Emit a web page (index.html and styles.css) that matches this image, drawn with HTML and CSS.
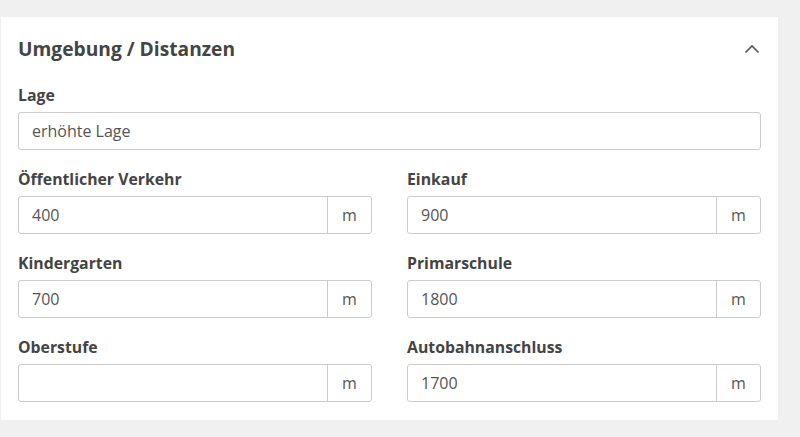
FILE: index.html
```html
<!DOCTYPE html>
<html lang="de">
<head>
<meta charset="utf-8">
<link rel="stylesheet" href="styles.css">
</head>
<body>
<section class="card">
  <header class="card-head">
    <h2 class="title">Umgebung / Distanzen</h2>
    <svg class="chevron" width="16" height="10" viewBox="0 0 16 10"><path d="M1.5 8.5 L8 2 L14.5 8.5" fill="none" stroke="#555" stroke-width="1.6"/></svg>
  </header>
  <div class="field">
    <label class="label">Lage</label>
    <div class="input"><span class="value">erhöhte Lage</span></div>
  </div>
  <div class="grid">
    <div class="field">
      <label class="label">Öffentlicher Verkehr</label>
      <div class="input group"><span class="value">400</span><span class="addon">m</span></div>
    </div>
    <div class="field">
      <label class="label">Einkauf</label>
      <div class="input group"><span class="value">900</span><span class="addon">m</span></div>
    </div>
    <div class="field">
      <label class="label">Kindergarten</label>
      <div class="input group"><span class="value">700</span><span class="addon">m</span></div>
    </div>
    <div class="field">
      <label class="label">Primarschule</label>
      <div class="input group"><span class="value">1800</span><span class="addon">m</span></div>
    </div>
    <div class="field">
      <label class="label">Oberstufe</label>
      <div class="input group"><span class="value"></span><span class="addon">m</span></div>
    </div>
    <div class="field">
      <label class="label">Autobahnanschluss</label>
      <div class="input group"><span class="value">1700</span><span class="addon">m</span></div>
    </div>
  </div>
</section>
</body>
</html>
```
FILE: styles.css
```css
html, body {
  margin: 0;
  padding: 0;
  background: #f0f0f0;
  font-family: "Open Sans", "Noto Sans", sans-serif;
}
body {
  padding-top: 17px;
  padding-left: 1px;
}
.card {
  width: 777px;
  box-sizing: border-box;
  background: #fff;
  padding: 20px 17px 18px 17px;
}
.card-head {
  display: flex;
  justify-content: space-between;
  align-items: center;
  height: 24px;
  margin-bottom: 24px;
}
.title {
  margin: 0;
  font-size: 19.2px;
  line-height: 24px;
  font-weight: 700;
  color: #444;
}
.chevron {
  margin-right: 1px;
  margin-top: 0;
}
.field {
  display: flex;
  flex-direction: column;
}
.label {
  font-size: 15.8px;
  line-height: 20px;
  font-weight: 700;
  color: #444;
  margin-bottom: 7px;
}
.input {
  height: 38px;
  box-sizing: border-box;
  border: 1px solid #ccc;
  border-radius: 3px;
  display: flex;
  align-items: stretch;
  font-size: 16px;
  color: #555;
}
.value {
  flex: 1;
  display: flex;
  align-items: center;
  padding-left: 13px;
}
.addon {
  width: 43px;
  border-left: 1px solid #ccc;
  display: flex;
  align-items: center;
  justify-content: center;
}
.grid {
  display: grid;
  grid-template-columns: 354px 354px;
  column-gap: 35px;
  row-gap: 19px;
  margin-top: 19px;
}
```
